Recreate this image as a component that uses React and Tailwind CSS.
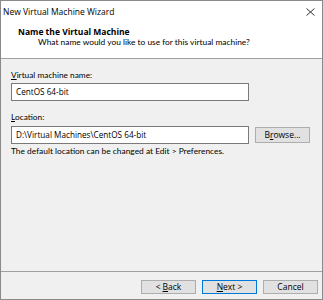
const Btn = ({ children, primary, className = "" }) => (
  <button
    className={`flex items-center justify-center bg-[#e1e1e1] border ${
      primary ? "border-[#0078d7]" : "border-[#adadad]"
    } text-[8.5px] text-black leading-none ${className}`}
  >
    {children}
  </button>
);

const lato = { fontFamily: 'Lato, "Open Sans", sans-serif' };

export default function App() {
  return (
    <div
      className="w-[323px] h-[300px] flex flex-col bg-[#f0f0f0] border border-[#8a8a8a] text-black"
      style={{ fontFamily: '"Open Sans", "Noto Sans", sans-serif' }}
    >
      {/* title bar */}
      <div className="h-[21px] bg-white flex items-center justify-between pl-[2px] pr-[7px]">
        <span className="text-[8.5px] leading-none mt-[1px]">New Virtual Machine Wizard</span>
        <svg width="9" height="8" viewBox="0 0 9 8">
          <path d="M0.5 0.5 L8.5 7.5 M8.5 0.5 L0.5 7.5" stroke="#333" strokeWidth="1" />
        </svg>
      </div>

      {/* header */}
      <div className="h-[37px] bg-white border-b border-[#a0a0a0] pl-[17px] pt-[4px]">
        <div className="text-[8.5px] font-bold leading-[11px]">Name the Virtual Machine</div>
        <div className="text-[8.4px] leading-[11px] pl-[20px]" style={lato}>
          What name would you like to use for this virtual machine?
        </div>
      </div>

      {/* body */}
      <div className="flex-1 px-[10px] pt-[11px]">
        <div className="text-[8.3px] leading-[11px]" style={lato}>
          <span className="underline">V</span>irtual machine name:
        </div>
        <div className="mt-[2px] w-[238px] h-[18px] bg-white border border-[#7a7a7a] flex items-center pl-[4px] text-[8.2px]">
          CentOS 64-bit
        </div>

        <div className="mt-[11px] text-[8.3px] leading-[11px]" style={lato}>
          <span className="underline">L</span>ocation:
        </div>
        <div className="mt-[3px] flex items-center gap-[6px]">
          <div className="w-[238px] h-[18px] bg-white border border-[#7a7a7a] flex items-center pl-[4px] text-[8.2px]">
            D:\Virtual Machines\CentOS 64-bit
          </div>
          <Btn className="w-[55px] h-[16px]">
            B<span className="underline">r</span>owse...
          </Btn>
        </div>
        <div className="mt-[2px] text-[8.4px] leading-[11px]" style={lato}>
          The default location can be changed at Edit &gt; Preferences.
        </div>
      </div>

      {/* footer */}
      <div className="h-[28px] border-t border-[#a0a0a0] flex items-start justify-end gap-[6px] pt-[8px] pr-[4px]">
        <Btn className="w-[55px] h-[14px]">
          &lt; <span className="underline ml-[2px]">B</span>ack
        </Btn>
        <Btn primary className="w-[55px] h-[14px]">
          <span className="underline">N</span>ext &gt;
        </Btn>
        <Btn className="w-[55px] h-[14px]">Cancel</Btn>
      </div>
    </div>
  );
}
